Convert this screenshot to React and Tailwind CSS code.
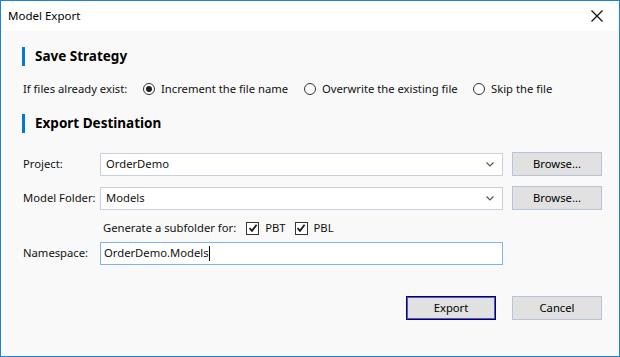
import { useState } from "react";

const font = { fontFamily: '"Noto Sans", "Open Sans", sans-serif' };

function SectionHeading({ title, className }) {
  return (
    <div className={"flex items-center gap-[10px] " + (className || "")}>
      <div className="w-[3px] h-[19px] bg-[#0078d7]" />
      <div className="text-[13.5px] font-bold text-black leading-none">{title}</div>
    </div>
  );
}

function Radio({ label, checked, onChange, className }) {
  return (
    <label onClick={onChange} className={"flex items-center gap-[6px] cursor-default whitespace-nowrap shrink-0 " + (className || "")}>
      <span className="w-[12px] h-[12px] shrink-0 rounded-full border border-[#333] bg-white flex items-center justify-center">
        {checked && <span className="w-[6px] h-[6px] rounded-full bg-[#222]" />}
      </span>
      <span>{label}</span>
    </label>
  );
}

function Check({ label, checked, onChange }) {
  return (
    <label onClick={onChange} className="flex items-center gap-[6px] cursor-default whitespace-nowrap">
      <span className="w-[13px] h-[13px] border border-[#333] bg-white flex items-center justify-center">
        {checked && (
          <svg width="10" height="10" viewBox="0 0 10 10">
            <path d="M1.5 5.2 L4 7.8 L8.6 1.8" fill="none" stroke="#1a1a1a" strokeWidth="1.8" />
          </svg>
        )}
      </span>
      <span>{label}</span>
    </label>
  );
}

function Combo({ value }) {
  return (
    <div className="w-[403px] h-[23px] shrink-0 bg-white border border-[#c7d0dc] flex items-center justify-between pl-[5px] pr-[8px]">
      <span>{value}</span>
      <svg width="8" height="5" viewBox="0 0 8 5">
        <path d="M0.5 0.5 L4 4 L7.5 0.5" fill="none" stroke="#555" strokeWidth="1.2" />
      </svg>
    </div>
  );
}

function Button({ children, primary }) {
  return (
    <button
      className={
        "w-[90px] h-[24px] bg-[#e1e1e1] text-black flex items-center justify-center " +
        (primary ? "border border-[#00007f] shadow-[inset_0_0_0_1px_#5a5aa8]" : "border border-[#b8c4d4]")
      }
    >
      {children}
    </button>
  );
}

export default function App() {
  const [strategy, setStrategy] = useState("increment");
  const [pbt, setPbt] = useState(true);
  const [pbl, setPbl] = useState(true);

  return (
    <div style={font} className="w-[620px] h-[357px] border border-[#1883d7] bg-[#f9f9f9] flex flex-col text-[11.25px] text-[#111] whitespace-nowrap">
      {/* title bar */}
      <div className="h-[30px] bg-white flex items-center justify-between pl-[7px] pr-[16px]">
        <span className="text-[11.5px] text-black">Model Export</span>
        <svg width="12" height="12" viewBox="0 0 12 12">
          <path d="M0.5 0.5 L11.5 11.5 M11.5 0.5 L0.5 11.5" stroke="#111" strokeWidth="1.3" />
        </svg>
      </div>

      <div className="flex flex-col pl-[21px] pr-[17px]">
        <SectionHeading title="Save Strategy" className="mt-[16px]" />

        <div className="flex items-center h-[20px] mt-[13px]">
          <span className="w-[121px] shrink-0 pl-[1px]">If files already exist:</span>
          <Radio
            className="w-[161px]"
            label="Increment the file name"
            checked={strategy === "increment"}
            onChange={() => setStrategy("increment")}
          />
          <Radio
            className="w-[169px]"
            label="Overwrite the existing file"
            checked={strategy === "overwrite"}
            onChange={() => setStrategy("overwrite")}
          />
          <Radio label="Skip the file" checked={strategy === "skip"} onChange={() => setStrategy("skip")} />
        </div>

        <SectionHeading title="Export Destination" className="mt-[15px]" />

        <div className="flex items-center mt-[19px]">
          <span className="w-[78px] shrink-0 pl-[1px]">Project:</span>
          <Combo value="OrderDemo" />
          <div className="ml-[9px]">
            <Button>Browse...</Button>
          </div>
        </div>

        <div className="flex items-center mt-[10px]">
          <span className="w-[78px] shrink-0 pl-[1px]">Model Folder:</span>
          <Combo value="Models" />
          <div className="ml-[9px]">
            <Button>Browse...</Button>
          </div>
        </div>

        <div className="flex items-center h-[18px] mt-[9px] pl-[81px] gap-[9px]">
          <span className="mr-[1px]">Generate a subfolder for:</span>
          <Check label="PBT" checked={pbt} onChange={() => setPbt(!pbt)} />
          <Check label="PBL" checked={pbl} onChange={() => setPbl(!pbl)} />
        </div>

        <div className="flex items-center mt-[5px]">
          <span className="w-[78px] shrink-0 pl-[1px]">Namespace:</span>
          <div className="w-[403px] h-[23px] bg-white border border-[#7eb4ea] flex items-center pl-[3px]">
            <span>OrderDemo.Models</span>
            <span className="w-px h-[15px] bg-black" />
          </div>
        </div>

        <div className="flex justify-end gap-[16px] mt-[31px]">
          <Button primary>Export</Button>
          <Button>Cancel</Button>
        </div>
      </div>
    </div>
  );
}
